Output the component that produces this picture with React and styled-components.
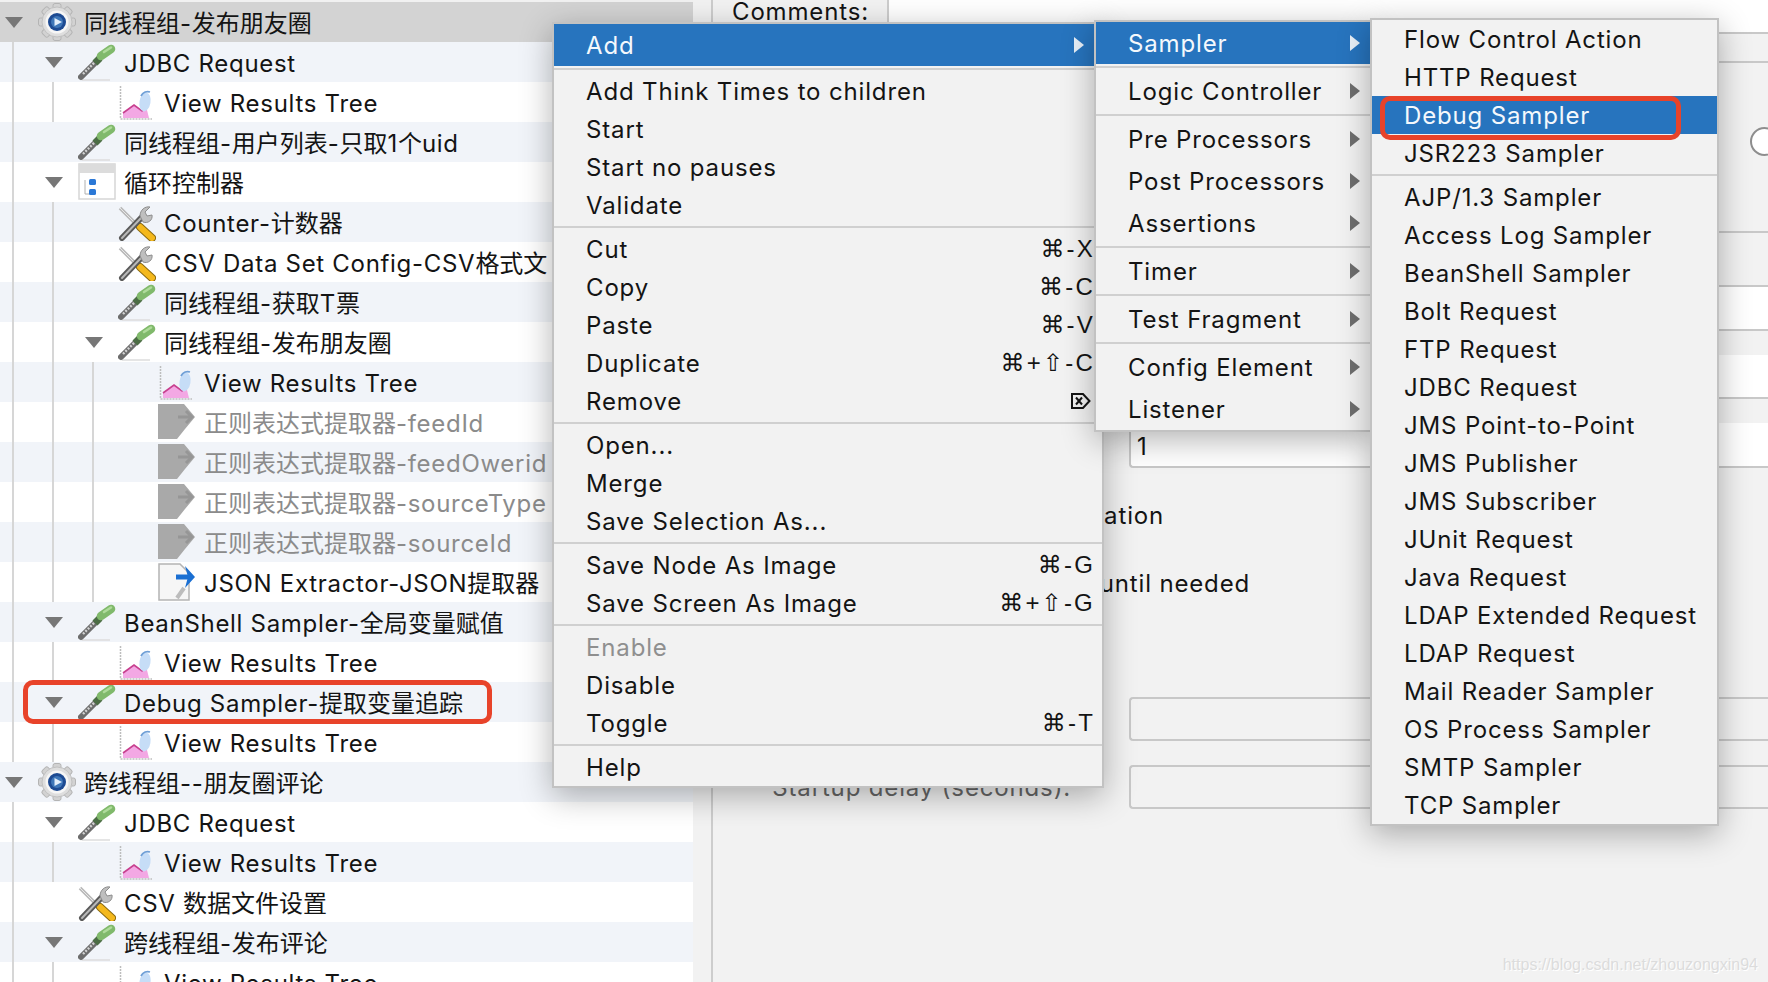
import React from "react";
import styled, { createGlobalStyle } from "styled-components";

const Global = createGlobalStyle`
  html, body { margin: 0; padding: 0; background: #f2f2f2; overflow: hidden; }
  * { box-sizing: border-box; }
  body {
    font-family: Inter, "Noto Sans CJK SC", "DejaVu Sans", sans-serif;
    font-size: 24px;
    letter-spacing: 0.85px;
    color: #141414;
  }
`;

const Page = styled.div`
  position: relative;
  display: flex;
  width: 1768px;
  height: 982px;
  overflow: hidden;
  background: #f2f2f2;
`;

/* ---------- tree ---------- */
const Tree = styled.div`
  width: 693px;
  flex: none;
  padding-top: 2px;
  background: #f1f1f1;
  overflow: hidden;
  letter-spacing: 0.7px;
`;
const Row = styled.div`
  display: flex;
  align-items: center;
  height: 40px;
  background: ${(p) => (p.$selected ? "#d3d3d3" : p.$tinted ? "#f1f4f9" : "#ffffff")};
  color: ${(p) => (p.$disabled ? "#8b8b8b" : "#141414")};
  white-space: nowrap;
`;
const Indent = styled.span`
  flex: none;
  align-self: stretch;
  width: 28px;
  margin-left: 12px;
  border-left: 2px solid #d6d6d6;
`;
const ArrowCell = styled.span`
  flex: none;
  width: 38px;
  padding-left: 5px;
`;
const TreeArrow = styled.span`
  display: block;
  width: 0;
  height: 0;
  border-left: 9px solid transparent;
  border-right: 9px solid transparent;
  border-top: 11px solid #777777;
`;
const NodeIcon = styled.svg`
  flex: none;
  display: block;
  width: 38px;
  height: 38px;
`;
const RowLabel = styled.span`
  position: relative;
  top: 2px;
  margin-left: 8px;
  line-height: 40px;
`;
const Han = styled.span`
  letter-spacing: 0;
`;

function Gear() {
  const teeth = [0, 45, 90, 135, 180, 225, 270, 315];
  return (
    <NodeIcon viewBox="0 0 38 38">
      {teeth.map((a) => (
        <rect key={a} x="15" y="0.5" width="8" height="8" rx="2" fill="#d2d2d2" stroke="#b4b4b4" transform={`rotate(${a} 19 19)`} />
      ))}
      <circle cx="19" cy="19" r="15" fill="#dedede" stroke="#c0c0c0" />
      <circle cx="19" cy="19" r="11.5" fill="#f6f6f6" />
      <circle cx="19" cy="19" r="9" fill="#1d4a92" />
      <circle cx="19" cy="19" r="6" fill="#3e76b8" />
      <path d="M16.5 15 L24 19 L16.5 23 Z" fill="#e2eefb" />
    </NodeIcon>
  );
}
function Dropper() {
  return (
    <NodeIcon viewBox="0 0 38 38">
      <path d="M4 37 H32" stroke="#dcdcdc" strokeWidth="1.5" />
      <path d="M3 34 L18 19" stroke="#6d6d6d" strokeWidth="6" strokeLinecap="round" />
      <path d="M5 31 L17 19" stroke="#d2d2d2" strokeWidth="2.4" strokeDasharray="2 1.4" />
      <path d="M17 20 L22 15" stroke="#4c6d45" strokeWidth="7" />
      <path d="M23 13 L33 6" stroke="#80b96b" strokeWidth="8.5" strokeLinecap="round" />
      <path d="M26 9 L33 4.5" stroke="#aedb9a" strokeWidth="2.5" strokeLinecap="round" />
    </NodeIcon>
  );
}
function Chart() {
  return (
    <NodeIcon viewBox="0 0 38 38">
      <path d="M2.5 3 V36 H34" fill="none" stroke="#bdbdbd" strokeWidth="1.5" strokeDasharray="2 1" />
      <path d="M5 35 V30 L16 22 L24 28 L28 23 L31 35 Z" fill="#f3a8e4" />
      <path d="M5 30 L16 22 L24 28 L28 23" fill="none" stroke="#c8408f" strokeWidth="1.6" />
      <ellipse cx="27" cy="19" rx="5.5" ry="9.5" fill="#c6ddf7" transform="rotate(10 27 19)" />
      <path d="M23 13 C25 9 29 8 32 9" fill="none" stroke="#6f9fd6" strokeWidth="1.8" />
    </NodeIcon>
  );
}
function Tools() {
  return (
    <NodeIcon viewBox="0 0 38 38">
      <path d="M2 5 L20 23" stroke="#b9b9b9" strokeWidth="3.5" />
      <path d="M2 5 L20 23" stroke="#e8e8e8" strokeWidth="1" />
      <path d="M22 24 L34 35" stroke="#8a6a10" strokeWidth="8" strokeLinecap="round" />
      <path d="M22 24 L34 35" stroke="#f4b81c" strokeWidth="6" strokeLinecap="round" />
      <path d="M4 35 L24 14" stroke="#5a5a5a" strokeWidth="6" strokeLinecap="round" />
      <path d="M4 35 L24 14" stroke="#b8b8b8" strokeWidth="2" strokeLinecap="round" />
      <path d="M22 13 C22 7 27 3 32 4 L27 9 L29 13 L34 12 C35 17 30 21 25 19 Z" fill="#bfbfbf" stroke="#8d8d8d" />
    </NodeIcon>
  );
}
function Loop() {
  return (
    <NodeIcon viewBox="0 0 38 38">
      <rect x="1" y="1" width="36" height="35" fill="#ffffff" stroke="#d6d6d6" strokeWidth="1.5" />
      <rect x="1" y="1" width="36" height="9" fill="#dcdcdc" />
      <path d="M7 17 V31 H12" fill="none" stroke="#b0b0b0" />
      <rect x="11" y="16" width="7" height="6" rx="1.5" fill="#2b78d6" />
      <rect x="11" y="26" width="7" height="6" rx="1.5" fill="#2b78d6" />
    </NodeIcon>
  );
}
function GrayExtractor() {
  return (
    <NodeIcon viewBox="0 0 38 38">
      <path d="M0 1 H26 L37 14 L27 26 L19 36 H0 Z" fill="#a9a9a9" />
      <path d="M20 14 H33 M28 8 L34 14 L28 20" fill="none" stroke="#969696" strokeWidth="3" />
    </NodeIcon>
  );
}
function JsonExtractor() {
  return (
    <NodeIcon viewBox="0 0 38 38">
      <path d="M1 1 H22 L31 10 V37 H1 Z" fill="#f6f6f6" stroke="#b4b4b4" strokeWidth="1.5" />
      <path d="M18 14 H34" stroke="#1a6fd2" strokeWidth="5" />
      <path d="M27 3 L37 14 L27 25 L30 14 Z" fill="#1a6fd2" />
      <path d="M19 35 L26 25" stroke="#bcbcbc" strokeWidth="4" />
    </NodeIcon>
  );
}
const icons = { gear: Gear, drop: Dropper, chart: Chart, tools: Tools, loop: Loop, gray: GrayExtractor, json: JsonExtractor };

const rows = [
  [0, 1, "gear", "同线程组-发布朋友圈"],
  [1, 1, "drop", "JDBC Request"],
  [2, 0, "chart", "View Results Tree"],
  [1, 0, "drop", "同线程组-用户列表-只取1个uid"],
  [1, 1, "loop", "循环控制器"],
  [2, 0, "tools", "Counter-计数器"],
  [2, 0, "tools", "CSV Data Set Config-CSV格式文"],
  [2, 0, "drop", "同线程组-获取T票"],
  [2, 1, "drop", "同线程组-发布朋友圈"],
  [3, 0, "chart", "View Results Tree"],
  [3, 0, "gray", "正则表达式提取器-feedId", 1],
  [3, 0, "gray", "正则表达式提取器-feedOwerid", 1],
  [3, 0, "gray", "正则表达式提取器-sourceType", 1],
  [3, 0, "gray", "正则表达式提取器-sourceId", 1],
  [3, 0, "json", "JSON Extractor-JSON提取器"],
  [1, 1, "drop", "BeanShell Sampler-全局变量赋值"],
  [2, 0, "chart", "View Results Tree"],
  [1, 1, "drop", "Debug Sampler-提取变量追踪"],
  [2, 0, "chart", "View Results Tree"],
  [0, 1, "gear", "跨线程组--朋友圈评论"],
  [1, 1, "drop", "JDBC Request"],
  [2, 0, "chart", "View Results Tree"],
  [1, 0, "tools", "CSV 数据文件设置"],
  [1, 1, "drop", "跨线程组-发布评论"],
  [2, 0, "chart", "View Results Tree"],
];

/* Latin letters are spaced out in the reference, Han characters are not. */
function Label({ text }) {
  return text
    .split(/([\u4e00-\u9fff]+)/)
    .map((part, i) => (i % 2 ? <Han key={i}>{part}</Han> : part));
}

/* ---------- right panel ---------- */
const Panel = styled.div`
  flex: 1;
  min-width: 0;
  margin-left: 18px;
  display: flex;
  flex-direction: column;
  border-left: 2px solid #cdcdcd;
  overflow: hidden;
`;
const CommentsRow = styled.div`
  display: flex;
  height: 34px;
  flex: none;
  border-bottom: 2px solid #c8c8c8;
  background: #ffffff;
`;
const CommentsLabel = styled.div`
  width: 176px;
  padding: 0 0 0 19px;
  line-height: 24px;
  background: #f2f2f2;
  border-right: 2px solid #cdcdcd;
  white-space: nowrap;
`;
const BlankBand = styled.div`
  flex: none;
  height: ${(p) => p.$h}px;
  ${(p) => p.$line && "border-bottom: 2px solid #c8c8c8;"}
`;
const RadioBand = styled.div`
  flex: none;
  height: 170px;
  padding: 64px 0 0 1037px;
  border-bottom: 2px solid #c8c8c8;
`;
const Radio = styled.div`
  width: 29px;
  height: 29px;
  border-radius: 50%;
  background: #ffffff;
  border: 2px solid #8e8e8e;
`;
const FieldRow = styled.div`
  flex: none;
  display: flex;
  align-items: center;
  height: ${(p) => p.$h}px;
  margin-top: ${(p) => p.$top || 0}px;
  padding-left: 416px;
`;
const Field = styled.div`
  flex: 1;
  height: 100%;
  display: flex;
  align-items: center;
  padding: ${(p) => (p.$plain ? 0 : 4)}px 0 0 6px;
  background: ${(p) => (p.$plain ? "#f2f2f2" : "#ffffff")};
  border: 2px solid #c8c8c8;
  border-right: none;
  border-top: ${(p) => (p.$plain ? "2px solid #c8c8c8" : "none")};
  border-radius: 4px 0 0 4px;
`;
const OptionLabel = styled.div`
  flex: none;
  height: 28px;
  line-height: 28px;
  margin-top: ${(p) => p.$top}px;
  padding-left: ${(p) => p.$left}px;
  white-space: nowrap;
`;
const FieldLabel = styled.div`
  width: 414px;
  flex: none;
  text-align: right;
  color: #666;
  margin-left: -416px;
  margin-right: 2px;
  padding-right: 56px;
  white-space: nowrap;
`;

/* ---------- menus ---------- */
const Menu = styled.div`
  position: absolute;
  left: ${(p) => p.$x}px;
  top: ${(p) => p.$y}px;
  width: ${(p) => p.$w}px;
  z-index: ${(p) => p.$z};
  background: #f2f2f2;
  border: 2px solid #c2c2c2;
  box-shadow: 0 8px 30px rgba(0, 0, 0, 0.3);
  white-space: nowrap;
`;
const Item = styled.div`
  display: flex;
  align-items: center;
  justify-content: space-between;
  height: ${(p) => p.$h}px;
  padding-left: ${(p) => p.$pl}px;
  padding-right: ${(p) => p.$pr}px;
  background: ${(p) => (p.$active ? "#2774be" : "transparent")};
  color: ${(p) => (p.$active ? "#f4f8fc" : p.$disabled ? "#8f8f8f" : "#141414")};
`;
const Separator = styled.div`
  height: 6px;
  padding-top: 2px;
  &::before {
    content: "";
    display: block;
    height: 2px;
    background: #d0d0d0;
  }
`;
const Caret = styled.span`
  flex: none;
  width: 0;
  height: 0;
  border-top: 8px solid transparent;
  border-bottom: 8px solid transparent;
  border-left: 10px solid ${(p) => (p.$active ? "#e8f0f8" : "#6e6e6e")};
`;
const Shortcut = styled.span`
  font-family: "Liberation Sans", "DejaVu Sans", sans-serif;
  letter-spacing: 2.2px;
`;
const DeleteGlyph = styled.svg`
  display: block;
  width: 21px;
  height: 18px;
  margin-right: 4px;
`;

const Annotation = styled.div`
  position: absolute;
  z-index: 10;
  left: ${(p) => p.$x}px;
  top: ${(p) => p.$y}px;
  width: ${(p) => p.$w}px;
  height: ${(p) => p.$h}px;
  border: 5px solid #e8432a;
  border-radius: 10px;
`;
const Watermark = styled.div`
  position: absolute;
  z-index: 11;
  right: 10px;
  bottom: 8px;
  font-family: "Liberation Sans", sans-serif;
  font-size: 16px;
  letter-spacing: 0;
  color: #dcdcdc;
  text-shadow: 1px 1px 0 #ffffff;
`;

const mainMenu = [
  ["Add", "", 1],
  "sep",
  ["Add Think Times to children"], ["Start"], ["Start no pauses"], ["Validate"],
  "sep",
  ["Cut", "⌘-X"], ["Copy", "⌘-C"], ["Paste", "⌘-V"], ["Duplicate", "⌘+⇧-C"], ["Remove", "del"],
  "sep",
  ["Open..."], ["Merge"], ["Save Selection As..."],
  "sep",
  ["Save Node As Image", "⌘-G"], ["Save Screen As Image", "⌘+⇧-G"],
  "sep",
  ["Enable", "", 0, 1], ["Disable"], ["Toggle", "⌘-T"],
  "sep",
  ["Help"],
];
const addMenu = [
  ["Sampler", 1], "sep", ["Logic Controller"], "sep",
  ["Pre Processors"], ["Post Processors"], ["Assertions"], "sep",
  ["Timer"], "sep", ["Test Fragment"], "sep", ["Config Element"], ["Listener"],
];
const samplerMenu = [
  "Flow Control Action", "HTTP Request", "*Debug Sampler", "JSR223 Sampler", "sep",
  "AJP/1.3 Sampler", "Access Log Sampler", "BeanShell Sampler", "Bolt Request", "FTP Request",
  "JDBC Request", "JMS Point-to-Point", "JMS Publisher", "JMS Subscriber", "JUnit Request",
  "Java Request", "LDAP Extended Request", "LDAP Request", "Mail Reader Sampler",
  "OS Process Sampler", "SMTP Sampler", "TCP Sampler",
];

function ShortcutMark({ value }) {
  if (value === "del") {
    return (
      <DeleteGlyph viewBox="0 0 21 18">
        <path d="M2 2 H13 L19.5 9 L13 16 H2 Z" fill="none" stroke="#141414" strokeWidth="2" />
        <path d="M6 5.5 L12 12.5 M12 5.5 L6 12.5" stroke="#141414" strokeWidth="2" />
      </DeleteGlyph>
    );
  }
  return <Shortcut>{value}</Shortcut>;
}

export default function App() {
  return (
    <Page>
      <Global />
      <Tree>
        {rows.map(([level, open, icon, text, disabled], i) => {
          const Icon = icons[icon];
          return (
            <Row key={i} $selected={i === 0} $tinted={i % 2 === 1} $disabled={disabled}>
              {Array.from({ length: level }).map((_, k) => (
                <Indent key={k} />
              ))}
              <ArrowCell>{open ? <TreeArrow /> : null}</ArrowCell>
              <Icon />
              <RowLabel><Label text={text} /></RowLabel>
            </Row>
          );
        })}
      </Tree>

      <Panel>
        <CommentsRow>
          <CommentsLabel>Comments:</CommentsLabel>
        </CommentsRow>
        <BlankBand $h={29} $line />
        <RadioBand>
          <Radio />
        </RadioBand>
        <BlankBand $h={54} $line />
        <FieldRow $h={44}><Field /></FieldRow>
        <FieldRow $h={44} $top={24}><Field /></FieldRow>
        <FieldRow $h={45} $top={24}><Field>1</Field></FieldRow>
        <OptionLabel $top={34} $left={111}>Same user on each iteration</OptionLabel>
        <OptionLabel $top={40} $left={111}>Delay Thread creation until needed</OptionLabel>
        <FieldRow $h={44} $top={99}><Field $plain /></FieldRow>
        <FieldRow $h={44} $top={24}>
          <FieldLabel>Startup delay (seconds):</FieldLabel>
          <Field $plain />
        </FieldRow>
      </Panel>

      <Menu $x={552} $y={22} $w={552} $z={2}>
        {mainMenu.map((m, i) =>
          m === "sep" ? (
            <Separator key={i} />
          ) : (
            <Item key={i} $h={m[2] ? 42 : 38} $pl={32} $pr={m[2] ? 18 : 7} $active={m[2]} $disabled={m[3]}>
              <span>{m[0]}</span>
              {m[2] ? <Caret $active /> : m[1] ? <ShortcutMark value={m[1]} /> : null}
            </Item>
          )
        )}
      </Menu>

      <Menu $x={1094} $y={20} $w={278} $z={3}>
        {addMenu.map((m, i) =>
          m === "sep" ? (
            <Separator key={i} />
          ) : (
            <Item key={i} $h={42} $pl={32} $pr={10} $active={m[1]}>
              <span>{m[0]}</span>
              <Caret $active={m[1]} />
            </Item>
          )
        )}
      </Menu>

      <Menu $x={1370} $y={18} $w={349} $z={4}>
        {samplerMenu.map((m, i) =>
          m === "sep" ? (
            <Separator key={i} />
          ) : (
            <Item key={i} $h={38} $pl={32} $pr={9} $active={m[0] === "*"}>
              <span>{m.replace("*", "")}</span>
            </Item>
          )
        )}
      </Menu>

      <Annotation $x={23} $y={680} $w={469} $h={44} />
      <Annotation $x={1380} $y={96} $w={301} $h={44} />
      <Watermark>https://blog.csdn.net/zhouzongxin94</Watermark>
    </Page>
  );
}
